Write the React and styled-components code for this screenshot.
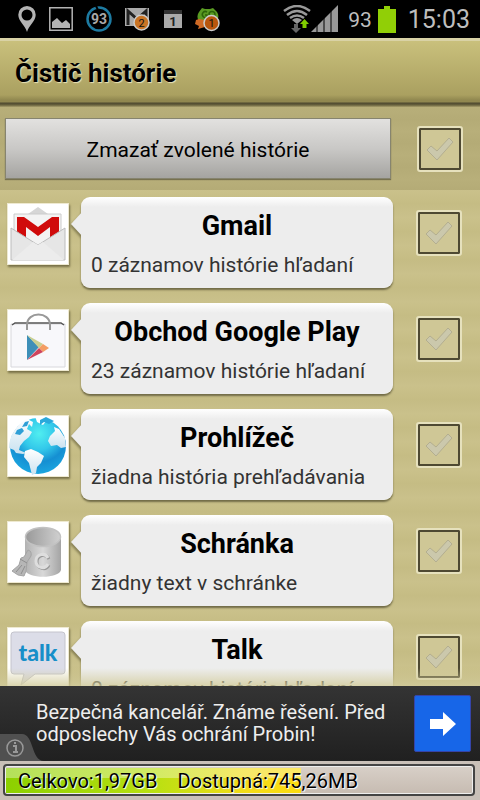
import React, { useState } from 'react';
import styled, { createGlobalStyle } from 'styled-components';

const HISTORY = [
  { id: 'gmail', title: 'Gmail', text: '0 záznamov histórie hľadaní' },
  { id: 'play', title: 'Obchod Google Play', text: '23 záznamov histórie hľadaní' },
  { id: 'browser', title: 'Prohlížeč', text: 'žiadna história prehľadávania' },
  { id: 'clipboard', title: 'Schránka', text: 'žiadny text v schránke' },
  { id: 'talk', title: 'Talk', text: '0 záznamov histórie hľadaní' },
];

const App = () => {
  const [checked, setChecked] = useState({});
  const [memory] = useState({ total: '1,97GB', free: '745,26MB', used: 63 });

  const toggle = id => setChecked({ ...checked, [id]: !checked[id] });
  const toggleAll = () => {
    const next = { all: !checked.all };
    HISTORY.forEach(({ id }) => {
      next[id] = next.all;
    });
    setChecked(next);
  };

  return (
    <Screen>
      <GlobalStyle />
      <StatusBar />
      <TitleBar>
        <Title>Čistič histórie</Title>
      </TitleBar>
      <Toolbar>
        <ClearButton type="button" onClick={() => setChecked({})}>
          Zmazať zvolené histórie
        </ClearButton>
        <CheckBox
          label="Zvoliť všetko"
          checked={!!checked.all}
          onChange={toggleAll}
        />
      </Toolbar>
      <List>
        {HISTORY.map(item => (
          <Row key={item.id}>
            <IconFrame>{ICONS[item.id]}</IconFrame>
            <Bubble>
              <BubbleTitle>{item.title}</BubbleTitle>
              <BubbleText>{item.text}</BubbleText>
            </Bubble>
            <CheckBox
              label={item.title}
              checked={!!checked[item.id]}
              onChange={() => toggle(item.id)}
            />
          </Row>
        ))}
      </List>
      <Ad>
        <AdText>Bezpečná kancelář. Známe řešení. Před odposlechy Vás ochrání Probin!</AdText>
        <AdLink href="#probin" aria-label="Probin">
          <svg width="28" height="24" viewBox="0 0 28 24">
            <path d="M1 7h13V0l13 12-13 12v-7H1z" fill="#fff" />
          </svg>
        </AdLink>
        <AdInfo>
          <svg width="44" height="27" viewBox="0 0 44 27">
            <path d="M0 0h22c12 0 9 27 22 27H0z" fill="#505050" />
            <circle cx="15" cy="14" r="8" fill="none" stroke="#999" strokeWidth="1.5" />
            <path d="M13 12h3v6m-3 0h5M15 8v2" fill="none" stroke="#999" strokeWidth="2" />
          </svg>
        </AdInfo>
      </Ad>
      <Memory>
        <MemoryBar>
          <MemoryFill style={{ width: `${memory.used}%` }} />
          <MemoryText>Celkovo:{memory.total}</MemoryText>
          <MemoryText>Dostupná:{memory.free}</MemoryText>
        </MemoryBar>
      </Memory>
    </Screen>
  );
};

export default App;

const CheckBox = ({ label, checked, onChange }) => (
  <CheckLabel>
    <CheckInput
      type="checkbox"
      aria-label={label}
      checked={checked}
      onChange={onChange}
    />
    <CheckMark viewBox="0 0 30 24" $on={checked}>
      <path d="M2 13l4-4 6 5L24 1l4 4-16 18z" />
    </CheckMark>
  </CheckLabel>
);

const StatusBar = () => (
  <Status>
    <StatusIcons>
      <svg width="18" height="26" viewBox="0 0 18 26">
        <path
          d="M9 0a8.7 8.7 0 0 0-8.7 8.7C.3 15 7 19 9 26c2-7 8.7-11 8.7-17.3A8.7 8.7 0 0 0 9 0zm0 3.500a5.500 5.500 0 1 1 0 11 5.500 5.500 0 0 1 0-11z"
          fill="#b4b4b4"
        />
      </svg>
      <svg width="24" height="24" viewBox="0 0 24 24">
        <path d="M.8.8h22.4v22.4H.8z" fill="none" stroke="#b4b4b4" strokeWidth="1.5" />
        <path d="M3 21v-6l5-4 5 5 4-3 4 4v4z" fill="#b4b4b4" />
      </svg>
      <svg width="26" height="26" viewBox="0 0 26 26">
        <circle cx="13" cy="13" r="11.5" fill="none" stroke="#1d7ba2" strokeWidth="2.5" />
        <path d="M10 0l2 4" stroke="#000" strokeWidth="2" />
        <text x="13" y="18" textAnchor="middle" fontSize="14" fontWeight="700" fill="#aaa">
          93
        </text>
      </svg>
      <svg width="26" height="24" viewBox="0 0 26 24">
        <path d="M0 1h24v18H0z" fill="#aaa" />
        <path d="M3 18V4l9 8 9-8v14" fill="none" stroke="#222" strokeWidth="3" />
        <circle cx="16.5" cy="15.5" r="7.5" fill="#c97424" stroke="#ccc" strokeWidth="1.5" />
        <text x="16.5" y="20" textAnchor="middle" fontSize="11" fill="#111">
          2
        </text>
      </svg>
      <svg width="18" height="18" viewBox="0 0 18 18">
        <path d="M0 0h18v18H0z" fill="#aaa" />
        <path d="M0 0h18v4H0z" fill="#333" />
        <text x="9" y="16" textAnchor="middle" fontSize="13" fontWeight="700" fill="#222">
          1
        </text>
      </svg>
      <svg width="26" height="25" viewBox="0 0 26 25">
        <path d="M4 5l3-4 3 1h5l3-1 4 4c4 6-1 12-9 12C4 17 0 11 4 5z" fill="#599a22" />
        <path
          d="M12 5a3 3 0 1 0 0 5V8h-2M20 7.500a3 3 0 1 1-6 0 3 3 0 0 1 6 0z"
          fill="none"
          stroke="#2c6209"
          strokeWidth="1.5"
        />
        <path d="M1 13l3-1 6 1v7l-7 2 1-3-4-2z" fill="#cf6a25" />
        <circle cx="16.5" cy="16" r="7.5" fill="#b9560d" stroke="#ccc" strokeWidth="1.5" />
        <text x="16.5" y="20" textAnchor="middle" fontSize="11" fill="#111">
          1
        </text>
      </svg>
    </StatusIcons>
    <StatusRight>
      <svg width="56" height="28" viewBox="0 0 56 28">
        <g fill="none" stroke="#999" strokeWidth="2.5">
          <path d="M1 6q13-10 26 0" />
          <path d="M4 10q10-8 20 0" />
          <path d="M7 13q7-5 14 0" />
        </g>
        <path d="M9 15q5-4 10 0l-5 4z" fill="#999" />
        <path d="M11 19h4v4h3l-5 5-5-5h3z" fill="#666" />
        <path d="M28 27L55 0v27z" fill="#999" />
        <path d="M34 17v10M41 10v17M48 3v24" stroke="#000" strokeWidth="1" />
        <path d="M17 19l4.500-5 4.500 5h-2.500v4h-4v-4z" fill="#80cc00" />
      </svg>
      <BatteryText>93</BatteryText>
      <svg width="18" height="27" viewBox="0 0 18 27">
        <path d="M0 3h6V0h6v3h6v24H0z" fill="#91cf06" />
      </svg>
      <Clock>15:03</Clock>
    </StatusRight>
  </Status>
);

const ICONS = {
  gmail: (
    <svg viewBox="0 0 60 60">
      <path d="M20 10L30 3l10 7z" fill="#d6d6d6" />
      <path d="M6 10h47v34H6z" fill="#f3f3f3" stroke="#ccc" />
      <path d="M9 13h7l14 10 14-10h7v18l-9 6V23L30 32 18 23v14l-9-6z" fill="#d00b0b" />
      <path d="M3 24l27 17 27-17v32H3z" fill="#e6e6e6" stroke="#bcbcbc" />
      <path d="M4 56l21-18 5 3 5-3 21 18" fill="#ececec" />
    </svg>
  ),
  play: (
    <svg viewBox="0 0 60 60">
      <path d="M3 14h54v43H3z" fill="#f8f8fb" stroke="#d8d8dc" />
      <path d="M4 15l3-2h46l3 2" fill="none" stroke="#555" strokeWidth="1.5" />
      <path d="M19 20v-5c0-14 23-14 23 0v5" fill="none" stroke="#999" strokeWidth="2" />
      <path d="M19 25l12 12-12 13z" fill="#3d8fb8" />
      <path d="M19 25l16 9-4 4z" fill="#c8cf91" />
      <path d="M35 34l6 4-6 4-4-4z" fill="#f49d63" />
      <path d="M19 50l16-8-4-4z" fill="#cf455d" />
    </svg>
  ),
  browser: (
    <svg viewBox="0 0 60 60">
      <defs>
        <radialGradient id="sea" cx="52%" cy="28%" r="72%">
          <stop offset="0" stopColor="#50eef0" />
          <stop offset="0.4" stopColor="#33c8ea" />
          <stop offset="0.7" stopColor="#158fd2" />
          <stop offset="1" stopColor="#1ba6e0" />
        </radialGradient>
        <linearGradient id="land" x1="0" y1="0" x2="0" y2="1">
          <stop offset="0" stopColor="#fff" />
          <stop offset="1" stopColor="#c9e2f0" />
        </linearGradient>
      </defs>
      <circle cx="30" cy="30" r="28" fill="url(#sea)" />
      <path
        d="M1 32C1 20 8 8 22 1l-1 3 4 2-1 5-3-3-2 5 5 3-3 5-5 4-4 5-1 4 7 3-3 1-7-1-2-3z"
        fill="url(#land)"
      />
      <path d="M9 14l5-2 2 3-4 4-5-1zM17 6l4-1-2 5-5 1z" fill="#2f9fd6" />
      <path d="M27 0h22l6 10-6-3-5-4-5 1-4 5-6-3z" fill="#fff" />
      <path d="M32 4l6-3 8 4-5 3-5-2-4 3z" fill="#2aa9db" />
      <path d="M42 20l5-5-1-4 5 2 6 9 1 9-5 1-4-3-6 1-3-5z" fill="url(#land)" />
      <path d="M17 35l6-2 7 3 6 4-3 7-4 4-1 6-4 2-3-12-5-6z" fill="url(#land)" />
    </svg>
  ),
  clipboard: (
    <svg viewBox="0 0 60 60">
      <defs>
        <linearGradient id="pot">
          <stop offset="0" stopColor="#b2b2b2" />
          <stop offset="0.5" stopColor="#d8d8d8" />
          <stop offset="1" stopColor="#a4a4a4" />
        </linearGradient>
        <linearGradient id="inside">
          <stop offset="0" stopColor="#999" />
          <stop offset="1" stopColor="#d0d0d0" />
        </linearGradient>
      </defs>
      <path d="M17 15v33c2 9 34 9 36 0V15z" fill="url(#pot)" />
      <ellipse cx="35" cy="15" rx="17.5" ry="9.5" fill="url(#inside)" stroke="#c2c2c2" strokeWidth="1.5" />
      <path d="M20 28q4 1 3 6l-4 6-1 9-2 5-6-1-6-4 7-6 2-7 3-1z" fill="#b6b6b6" stroke="#a4a4a4" />
      <path d="M12 37l7 4M8 50l6-7M13 52l4-8" stroke="#8f8f8f" fill="none" />
      <path
        d="M41 37c-3-6-12-4-12 3s9 9 12 3"
        fill="none"
        stroke="#999"
        strokeWidth="3"
      />
      <path
        d="M40 36c-3-6-12-4-12 3s9 9 12 3"
        fill="none"
        stroke="#dedede"
        strokeWidth="3"
      />
    </svg>
  ),
  talk: (
    <svg viewBox="0 0 60 60">
      <path d="M6 4h48q3 0 3 3v36q0 3-3 3H27L13 57l3-11H6q-3 0-3-3V7q0-3 3-3z" fill="#dcdde8" stroke="#c4c4cc" />
      <text x="30" y="33" textAnchor="middle" fontFamily="Lato, sans-serif" fontSize="23" fontWeight="900" fill="#178fc9">
        talk
      </text>
    </svg>
  ),
};

const GlobalStyle = createGlobalStyle`
  * {
    box-sizing: border-box;
  }
  body {
    margin: 0;
    font-family: Roboto, 'Noto Sans', sans-serif;
    color: #000;
  }
  svg {
    display: block;
  }
`;

const Screen = styled.div`
  display: flex;
  flex-direction: column;
  height: 100vh;
  overflow: hidden;
  background-color: #c8bf85;
`;

const Status = styled.header`
  display: flex;
  flex: none;
  justify-content: space-between;
  align-items: center;
  height: 38px;
  padding: 0 10px 0 18px;
  background-color: #000;
`;

const StatusIcons = styled.div`
  display: flex;
  align-items: center;
  gap: 13px;
`;

const StatusRight = styled.div`
  display: flex;
  align-items: center;
  color: #bebebe;
`;

const BatteryText = styled.span`
  margin: 2px 6px 0 9px;
  font-size: 21px;
`;

const Clock = styled.span`
  margin-left: 12px;
  font-size: 25px;
`;

const TitleBar = styled.div`
  display: flex;
  flex: none;
  align-items: center;
  height: 69px;
  padding: 0 15px 2px;
  border-top: 3px solid #d9d2a6;
  background: linear-gradient(#c9c07c, #aaa060 54px, #918850 59px, #918850 61px, #4e4930 62px, #68623e 64px, #a99f6c 66px);
`;

const Title = styled.h1`
  margin: 0;
  font-size: 26px;
  font-weight: 700;
  text-shadow: 1px 1px 1px #e8e2b8;
`;

const Toolbar = styled.div`
  display: flex;
  flex: none;
  align-items: center;
  gap: 26px;
  height: 83px;
  padding: 0 17px 0 5px;
  background: repeating-linear-gradient(#b8af7a, #b4ab76 12px, #b8af7a 24px);
`;

const ClearButton = styled.button`
  flex: 1;
  height: 61px;
  padding: 2px 0 0;
  border: 1px solid #86846f;
  background: linear-gradient(#e2e1df, #c9c8c6 50%, #a5a4a1);
  box-shadow: 0 1px 1px #77714f;
  color: #000;
  font-family: inherit;
  font-size: 21px;
  cursor: pointer;
`;

const List = styled.ul`
  position: relative;
  flex: 1;
  min-height: 0;
  margin: 0;
  padding: 7px 0 0;
  overflow: hidden;
  list-style: none;
  background: repeating-linear-gradient(#cac18b, #c5bc84 14px, #cac18b 28px);

  &::after {
    content: '';
    position: absolute;
    right: 0;
    bottom: 0;
    left: 0;
    height: 18px;
    background: linear-gradient(rgba(210, 203, 155, 0), rgba(210, 203, 155, 0.8));
  }
`;

const Row = styled.li`
  display: flex;
  align-items: flex-start;
  height: 91px;
  margin-bottom: 15px;
  padding: 0 18px 0 7px;
`;

const IconFrame = styled.div`
  width: 62px;
  height: 62px;
  margin-top: 6px;
  border: 1px solid #eee9d0;
  background-color: #fff;
  box-shadow: 1px 2px 2px #777047;
`;

const Bubble = styled.div`
  position: relative;
  flex: 1;
  height: 91px;
  margin: 0 23px 0 12px;
  padding: 13px 10px 0;
  border-radius: 9px;
  background: linear-gradient(#fff, #ededed 10px);
  box-shadow: 0 2px 2px #716b47;

  &::before {
    content: '';
    position: absolute;
    top: 14px;
    left: -10px;
    border: solid transparent;
    border-width: 13px 12px 13px 0;
    border-right-color: #ededed;
    filter: drop-shadow(-1px 2px 1px rgba(119, 112, 71, 0.8));
    clip-path: inset(0 2px -4px -2px);
  }
`;

const BubbleTitle = styled.h2`
  margin: 0;
  font-size: 27px;
  font-weight: 700;
  line-height: 32px;
  text-align: center;
`;

const BubbleText = styled.p`
  margin: 10px 0 0;
  color: #333;
  font-size: 21px;
  line-height: 26px;
  white-space: nowrap;
`;

const CheckLabel = styled.label`
  display: grid;
  place-items: center;
  cursor: pointer;

  ${Row} & {
    margin-top: 13px;
  }
`;

const CheckInput = styled.input`
  grid-area: 1 / 1;
  appearance: none;
  width: 46px;
  height: 46px;
  margin: 0;
  border: 2px solid #e6e1bd;
  border-radius: 3px;
  background-color: #cfc796;
  box-shadow: inset 0 0 0 2px #4e4932;
`;

const CheckMark = styled.svg`
  grid-area: 1 / 1;
  width: 30px;
  height: 24px;
  fill: ${props => (props.$on ? '#7fb51c' : '#cbc8ac')};
  stroke: ${props => (props.$on ? '#527c08' : '#b3ae90')};
  pointer-events: none;
`;

const Ad = styled.aside`
  position: relative;
  display: flex;
  flex: none;
  align-items: center;
  justify-content: space-between;
  height: 75px;
  padding: 0 9px 0 36px;
  background: linear-gradient(#343434, #202020);
`;

const AdText = styled.p`
  max-width: 360px;
  margin: 0;
  padding-bottom: 2px;
  color: #eee;
  font-size: 20px;
  line-height: 22px;
`;

const AdLink = styled.a`
  display: flex;
  flex: none;
  justify-content: center;
  align-items: center;
  width: 57px;
  height: 57px;
  border: 1px solid #3544a8;
  border-radius: 2px;
  background-color: #1766e8;
`;

const AdInfo = styled.div`
  position: absolute;
  bottom: 0;
  left: 0;
`;

const Memory = styled.footer`
  flex: none;
  height: 39px;
  padding: 3px 5px 4px 3px;
  background-color: #c9c0b8;
`;

const MemoryBar = styled.div`
  position: relative;
  display: flex;
  align-items: center;
  gap: 20px;
  height: 32px;
  padding: 2px 0 0 13px;
  border: 2px solid #444;
  border-radius: 4px;
  background: linear-gradient(#d8d0c8, #c6bbb1);
  box-shadow: inset 0 0 0 1px #eee;
`;

const MemoryFill = styled.div`
  position: absolute;
  top: 2px;
  bottom: 1px;
  left: 1px;
  background:
    linear-gradient(rgba(255, 255, 255, 0.35) 40%, transparent 41%),
    linear-gradient(90deg, #8cd000, #b9e012 50%, #f4dc18 82%, #fbdc10);
`;

const MemoryText = styled.span`
  position: relative;
  font-size: 20px;
  text-shadow: 1px 1px 1px #fff;
`;
